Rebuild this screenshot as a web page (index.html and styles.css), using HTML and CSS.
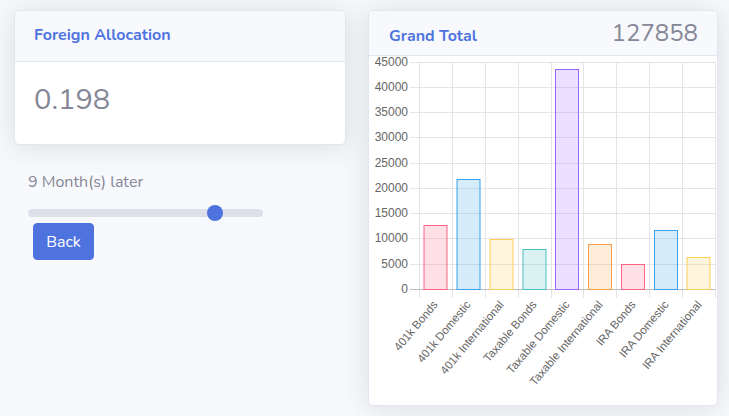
FILE: index.html
```html
<!DOCTYPE html>
<html>
<head>
<meta charset="utf-8">
<link rel="stylesheet" href="styles.css">
</head>
<body>
<div class="page">
  <div class="col-left">
    <div class="card">
      <div class="card-header"><h6 class="title">Foreign Allocation</h6></div>
      <div class="card-body"><div class="value">0.198</div></div>
    </div>
    <div class="controls">
      <div class="months">9 Month(s) later</div>
      <input class="range" type="range" min="0" max="11" value="9">
      <button class="btn">Back</button>
    </div>
  </div>
  <div class="col-right">
    <div class="card card-chart">
      <div class="card-header header-row">
        <h6 class="title">Grand Total</h6>
        <div class="total">127858</div>
      </div>
      <div class="chart-body">
        <svg class="chart" width="348" height="349" viewBox="0 0 348 349">
          <g class="grid">
            <line x1="41" y1="6.5" x2="346" y2="6.5"/>
            <line x1="41" y1="31.5" x2="346" y2="31.5"/>
            <line x1="41" y1="56.5" x2="346" y2="56.5"/>
            <line x1="41" y1="81.5" x2="346" y2="81.5"/>
            <line x1="41" y1="107.5" x2="346" y2="107.5"/>
            <line x1="41" y1="132.5" x2="346" y2="132.5"/>
            <line x1="41" y1="157.5" x2="346" y2="157.5"/>
            <line x1="41" y1="182.5" x2="346" y2="182.5"/>
            <line x1="41" y1="208.5" x2="346" y2="208.5"/>
            <line x1="50.5" y1="6" x2="50.5" y2="242"/>
            <line x1="83.5" y1="6" x2="83.5" y2="242"/>
            <line x1="116.5" y1="6" x2="116.5" y2="242"/>
            <line x1="149.5" y1="6" x2="149.5" y2="242"/>
            <line x1="182.5" y1="6" x2="182.5" y2="242"/>
            <line x1="214.5" y1="6" x2="214.5" y2="242"/>
            <line x1="247.5" y1="6" x2="247.5" y2="242"/>
            <line x1="280.5" y1="6" x2="280.5" y2="242"/>
            <line x1="313.5" y1="6" x2="313.5" y2="242"/>
            <line x1="346.5" y1="6" x2="346.5" y2="242"/>
          </g>
          <line class="zero" x1="41" y1="233.5" x2="346" y2="233.5"/>
          <g class="ylabels">
            <text x="39" y="6.5">45000</text>
            <text x="39" y="31.5">40000</text>
            <text x="39" y="56.5">35000</text>
            <text x="39" y="81.5">30000</text>
            <text x="39" y="107.5">25000</text>
            <text x="39" y="132.5">20000</text>
            <text x="39" y="157.5">15000</text>
            <text x="39" y="182.5">10000</text>
            <text x="39" y="208.5">5000</text>
            <text x="39" y="233.5">0</text>
          </g>
          <g class="bars">
            <rect class="b-pink" x="55" y="169.5" width="23" height="64"/>
            <rect class="b-blue" x="88" y="123.5" width="23" height="110"/>
            <rect class="b-yellow" x="121" y="183.5" width="23" height="50"/>
            <rect class="b-teal" x="154" y="193.5" width="23" height="40"/>
            <rect class="b-purple" x="186.5" y="13.5" width="23" height="220"/>
            <rect class="b-orange" x="219.5" y="188.5" width="23" height="45"/>
            <rect class="b-pink" x="252.5" y="208.5" width="23" height="25"/>
            <rect class="b-blue" x="285.5" y="174.5" width="23" height="59"/>
            <rect class="b-yellow" x="318" y="201.5" width="23" height="32"/>
          </g>
          <g class="xlabels">
            <text transform="translate(67 247) rotate(-50)">401k Bonds</text>
            <text transform="translate(100 247) rotate(-50)">401k Domestic</text>
            <text transform="translate(133 247) rotate(-50)">401k International</text>
            <text transform="translate(166 247) rotate(-50)">Taxable Bonds</text>
            <text transform="translate(199 247) rotate(-50)">Taxable Domestic</text>
            <text transform="translate(232 247) rotate(-50)">Taxable International</text>
            <text transform="translate(265 247) rotate(-50)">IRA Bonds</text>
            <text transform="translate(298 247) rotate(-50)">IRA Domestic</text>
            <text transform="translate(331 247) rotate(-50)">IRA International</text>
          </g>
        </svg>
      </div>
    </div>
  </div>
</div>
</body>
</html>
```
FILE: styles.css
```css
html, body {
  margin: 0;
  padding: 0;
  background: #f8f9fc;
  font-family: "Nunito", "Open Sans", "Noto Sans", sans-serif;
  color: #858796;
}
.page {
  display: flex;
  gap: 22px;
  padding: 10px 11px 10px 14px;
  width: 729px;
  height: 416px;
  box-sizing: border-box;
  overflow: hidden;
}
.col-left {
  width: 332px;
  flex: none;
}
.col-right {
  width: 350px;
  flex: none;
}
.card {
  background: #fff;
  border: 1px solid #e3e6f0;
  border-radius: 5px;
  box-shadow: 0 2px 28px 0 rgba(58, 59, 69, 0.15);
  overflow: hidden;
}
.card-header {
  background: #f8f9fc;
  border-bottom: 1px solid #e3e6f0;
  padding: 15px 19px;
  height: 51px;
  box-sizing: border-box;
}
.title {
  margin: 0;
  font-size: 16px;
  font-weight: 700;
  color: #4e73df;
  line-height: 19px;
}
.card-body {
  padding: 19px 19px 0;
  height: 82px;
  box-sizing: border-box;
}
.value {
  font-size: 29px;
  line-height: 38px;
  color: #858796;
}
.controls {
  padding: 25px 0 0 14px;
}
.months {
  font-size: 16px;
  line-height: 24px;
  color: #858796;
}
.range {
  -webkit-appearance: none;
  appearance: none;
  display: block;
  width: 235px;
  height: 8px;
  margin: 15px 0 0;
  padding: 0;
  background: #dddfeb;
  border-radius: 4px;
  outline: none;
}
.range::-webkit-slider-thumb {
  -webkit-appearance: none;
  appearance: none;
  width: 16px;
  height: 16px;
  border-radius: 50%;
  background: #4e73df;
  border: none;
}
.btn {
  display: block;
  margin: 6px 0 0 5px;
  width: 61px;
  height: 37px;
  padding: 0;
  border: 1px solid #4e73df;
  border-radius: 4px;
  background: #4e73df;
  color: #fff;
  font-family: inherit;
  font-size: 16px;
}
.card-chart {
  height: 396px;
  box-sizing: border-box;
}
.header-row {
  display: flex;
  justify-content: space-between;
  align-items: baseline;
  height: 45px;
  padding: 8px 19px 0 20px;
}
.total {
  font-size: 24px;
  line-height: 28px;
  color: #858796;
}
.chart-body {
  height: 349px;
}
.chart {
  display: block;
}
.grid line {
  stroke: #e5e5e5;
  stroke-width: 1;
}
.zero {
  stroke: #bdbdbd;
  stroke-width: 1;
}
.ylabels text {
  font-family: "Liberation Sans", Arial, sans-serif;
  font-size: 12px;
  fill: #666;
  text-anchor: end;
  dominant-baseline: middle;
}
.xlabels text {
  font-family: "Liberation Sans", Arial, sans-serif;
  font-size: 11.5px;
  fill: #666;
  text-anchor: end;
  dominant-baseline: middle;
}
.bars rect { stroke-width: 1; }
.b-pink { fill: rgba(255, 99, 132, 0.2); stroke: rgb(255, 99, 132); }
.b-blue { fill: rgba(54, 162, 235, 0.2); stroke: rgb(54, 162, 235); }
.b-yellow { fill: rgba(255, 206, 86, 0.2); stroke: rgb(255, 206, 86); }
.b-teal { fill: rgba(75, 192, 192, 0.2); stroke: rgb(75, 192, 192); }
.b-purple { fill: rgba(153, 102, 255, 0.2); stroke: rgb(153, 102, 255); }
.b-orange { fill: rgba(255, 159, 64, 0.2); stroke: rgb(255, 159, 64); }
```
